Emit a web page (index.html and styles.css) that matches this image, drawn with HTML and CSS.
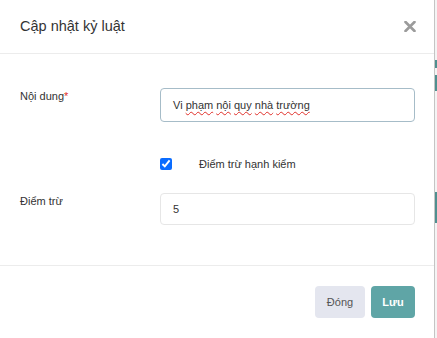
FILE: index.html
```html
<!DOCTYPE html>
<html lang="vi">
<head>
<meta charset="utf-8">
<title>Cập nhật kỷ luật</title>
<link rel="stylesheet" href="styles.css">
</head>
<body>
<div class="page">
  <div class="modal">
    <div class="modal-header">
      <h2 class="modal-title">Cập nhật kỷ luật</h2>
      <button class="close" aria-label="Đóng">
        <svg width="12" height="11" viewBox="0 0 12 11"><path d="M1.5 1 L10.5 10 M10.5 1 L1.5 10" stroke="#9b9b9b" stroke-width="2.6" stroke-linecap="round" fill="none"/></svg>
      </button>
    </div>
    <div class="modal-body">
      <div class="row row-content">
        <label class="label">Nội dung<span class="req">*</span></label>
        <div class="input input-focus"><span class="value">Vi <span class="sp">phạm</span> <span class="sp">nội</span> <span class="sp">quy</span> <span class="sp">nhà</span> <span class="sp">trường</span></span></div>
      </div>
      <div class="row row-check">
        <span></span>
        <label class="check"><input type="checkbox" checked><span class="check-text">Điểm trừ hạnh kiểm</span></label>
      </div>
      <div class="row row-score">
        <label class="label">Điểm trừ</label>
        <div class="input input-plain"><span class="value">5</span></div>
      </div>
    </div>
    <div class="modal-footer">
      <button class="btn btn-close">Đóng</button>
      <button class="btn btn-save">Lưu</button>
    </div>
  </div>
  <div class="backdrop">
    <div class="teal t1"></div>
    <div class="teal t2"></div>
    <div class="teal t3"></div>
  </div>
</div>
</body>
</html>
```
FILE: styles.css
```css
* { box-sizing: border-box; }
html, body { margin: 0; padding: 0; }
body {
  font-family: "Liberation Sans", Arial, sans-serif;
  color: #333;
  background: #fff;
}
.page {
  display: flex;
  width: 437px;
  height: 338px;
  overflow: hidden;
}
.modal {
  width: 434px;
  height: 338px;
  background: #fff;
  display: flex;
  flex-direction: column;
}
.modal-header {
  height: 54px;
  border-bottom: 1px solid #ececec;
  display: flex;
  align-items: center;
  justify-content: space-between;
  padding: 0 18px 2px 20px;
}
.modal-title {
  margin: 0;
  font-size: 14.5px;
  font-weight: normal;
  color: #333;
}
.close {
  border: 0;
  background: none;
  padding: 0;
  width: 12px;
  height: 11px;
  display: block;
  margin-top: 1px;
}
.close svg { display: block; }
.modal-body {
  padding: 34px 19px 0 20px;
  height: 212px;
  border-bottom: 1px solid #ececec;
}
.row {
  display: grid;
  grid-template-columns: 140px 255px;
  align-items: start;
}
.row-check { margin-top: 33px; height: 18px; align-items: center; }
.row-score { margin-top: 20px; }
.label {
  font-size: 11px;
  line-height: 18px;
  color: #333;
  margin-top: -1px;
}
.req { color: #e0302a; }
.input {
  font-size: 11px;
  color: #333;
  padding: 0 12px;
  display: flex;
  align-items: center;
  border-radius: 4px;
  background: #fff;
}
.value { white-space: pre; }
.input-focus {
  height: 34px;
  border: 1px solid #a6bcc8;
}
.input-plain {
  height: 32px;
  border: 1px solid #e6e6e6;
}
.sp {
  text-decoration: underline wavy #e0302a;
  text-decoration-thickness: 1px;
  text-underline-offset: 2px;
}
.check {
  display: flex;
  align-items: center;
  font-size: 11px;
  color: #333;
}
.check input {
  margin: 0;
  width: 12px;
  height: 12px;
  accent-color: #0a6cff;
}
.check-text { margin-left: 27px; }
.modal-footer {
  display: flex;
  justify-content: flex-end;
  gap: 6px;
  padding: 20px 19px 0 0;
}
.btn {
  height: 32px;
  border: 0;
  border-radius: 4px;
  font-family: "Liberation Sans", Arial, sans-serif;
  font-size: 11px;
  padding: 0;
}
.btn-close {
  width: 50px;
  background: #e4e6ef;
  color: #555;
}
.btn-save {
  width: 44px;
  background: #5fa5a6;
  color: #fff;
  font-weight: bold;
}
.backdrop {
  width: 3px;
  height: 338px;
  border-left: 1px solid #c4c4c4;
  background: #f4f4f4;
  position: relative;
}
.teal {
  position: absolute;
  left: 0;
  width: 2px;
  background: #4f8f8f;
}
.t1 { top: 60px; height: 8px; }
.t2 { top: 75px; height: 16px; }
.t3 { top: 192px; height: 31px; }
```
